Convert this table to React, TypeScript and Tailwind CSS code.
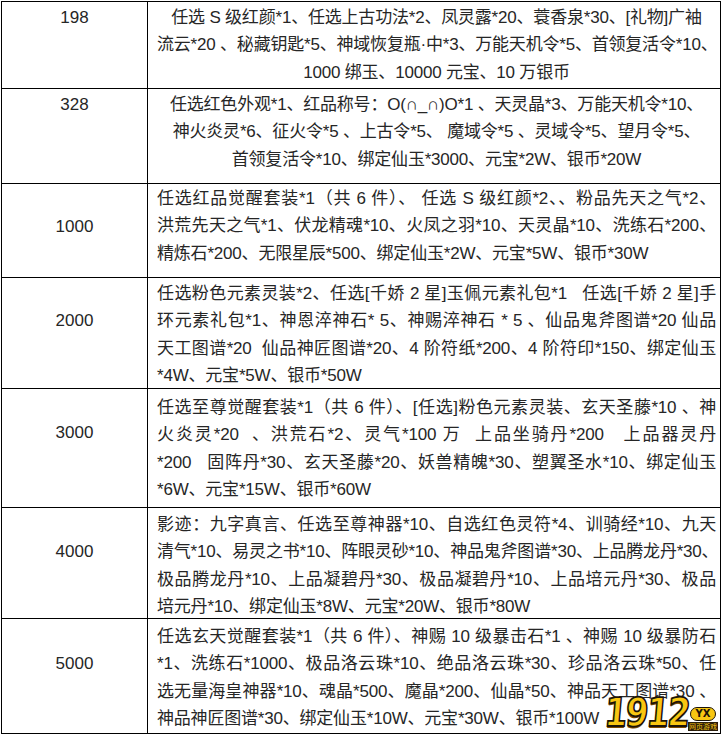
import React from 'react';

// ============================================================================
// Data
// ============================================================================

type Row = {
  amount: string;
  height: string;
  pad: string;
  numPad: string;
  centered?: boolean;
  lines: string[];
};

const rows: Row[] = [
  {
    amount: '198',
    height: 'h-[87px]',
    pad: 'pt-[2px]',
    numPad: 'pt-[2px]',
    centered: true,
    lines: [
      '任选 S 级红颜*1、任选上古功法*2、凤灵露*20、蓑香泉*30、[礼物]广袖',
      '流云*20 、秘藏钥匙*5、神域恢复瓶·中*3、万能天机令*5、首领复活令*10、',
      '1000 绑玉、10000 元宝、10 万银币',
    ],
  },
  {
    amount: '328',
    height: 'h-[95px]',
    pad: 'pt-[2px]',
    numPad: 'pt-[2px]',
    centered: true,
    lines: [
      '任选红色外观*1、红品称号：O(∩_∩)O*1 、天灵晶*3、万能天机令*10、',
      '神火炎灵*6、征火令*5 、上古令*5、 魔域令*5 、灵域令*5、望月令*5、',
      '首领复活令*10、绑定仙玉*3000、元宝*2W、银币*20W',
    ],
  },
  {
    amount: '1000',
    height: 'h-[94px]',
    pad: 'pt-[1px]',
    numPad: 'pt-[29px]',
    lines: [
      '任选红品觉醒套装*1（共 6 件）、 任选 S 级红颜*2、、粉品先天之气*2、',
      '洪荒先天之气*1、伏龙精魂*10、火凤之羽*10、天灵晶*10、洗练石*200、',
      '精炼石*200、无限星辰*500、绑定仙玉*2W、元宝*5W、银币*30W',
    ],
  },
  {
    amount: '2000',
    height: 'h-[111px]',
    pad: 'pt-[2px]',
    numPad: 'pt-[29px]',
    lines: [
      '任选粉色元素灵装*2、任选[千娇 2 星]玉佩元素礼包*1   任选[千娇 2 星]手',
      '环元素礼包*1、神恩淬神石* 5、神赐淬神石 * 5 、仙品鬼斧图谱*20 仙品',
      '天工图谱*20  仙品神匠图谱*20、4 阶符纸*200、4 阶符印*150、绑定仙玉',
      '*4W、元宝*5W、银币*50W',
    ],
  },
  {
    amount: '3000',
    height: 'h-[119px]',
    pad: 'pt-[5px]',
    numPad: 'pt-[30px]',
    lines: [
      '任选至尊觉醒套装*1（共 6 件）、[任选]粉色元素灵装、玄天圣藤*10 、神',
      '火炎灵*20  、洪荒石*2、灵气*100 万  上品坐骑丹*200   上品器灵丹',
      '*200   固阵丹*30、玄天圣藤*20、妖兽精魄*30、塑翼圣水*10、绑定仙玉',
      '*6W、元宝*15W、银币*60W',
    ],
  },
  {
    amount: '4000',
    height: 'h-[111px]',
    pad: 'pt-[3px]',
    numPad: 'pt-[30px]',
    lines: [
      '影迹：九字真言、任选至尊神器*10、自选红色灵符*4、训骑经*10、九天',
      '清气*10、易灵之书*10、阵眼灵砂*10、神品鬼斧图谱*30、上品腾龙丹*30、',
      '极品腾龙丹*10、上品凝碧丹*30、极品凝碧丹*10、上品培元丹*30、极品',
      '培元丹*10、绑定仙玉*8W、元宝*20W、银币*80W',
    ],
  },
  {
    amount: '5000',
    height: 'h-[115px]',
    pad: 'pt-[4px]',
    numPad: 'pt-[31px]',
    lines: [
      '任选玄天觉醒套装*1（共 6 件）、神赐 10 级暴击石*1 、神赐 10 级暴防石',
      '*1、洗练石*1000、极品洛云珠*10、绝品洛云珠*30、珍品洛云珠*50、任',
      '选无量海皇神器*10、魂晶*500、魔晶*200、仙晶*50、神品天工图谱*30 、',
      '神品神匠图谱*30、绑定仙玉*10W、元宝*30W、银币*100W',
    ],
  },
];

// ============================================================================
// Watermark
// ============================================================================

const Watermark = () => (
  <div className="pointer-events-none absolute bottom-[2px] right-[2px] flex items-end gap-[1px]">
    <span className="origin-bottom scale-y-[1.2] -skew-x-6 font-['DejaVu_Sans',sans-serif] text-[33px] font-black leading-none tracking-[-2px] text-[#f8c612] [-webkit-text-stroke:1.5px_#1b1308] [text-shadow:0_2px_0_#7a4a00]">
      1912
    </span>
    <div className="mb-[1px] flex flex-col items-center gap-[1px]">
      <span className="rounded-full border border-[#1b1308] bg-[#f8c612] px-[5px] font-['DejaVu_Sans',sans-serif] text-[10px] font-bold leading-[12px] text-[#1b1308]">
        YX
      </span>
      <span className="bg-[#2a1d0c] px-[1px] font-['Noto_Sans_CJK_SC',sans-serif] text-[7px] leading-[9px] text-[#f8c612]">
        网页游戏
      </span>
    </div>
  </div>
);

// ============================================================================
// Table
// ============================================================================

const RewardRow = ({ row }: { row: Row }) => (
  <div className={`flex border-b border-black ${row.height}`}>
    <div className={`w-[146px] shrink-0 border-r border-black text-center text-[17px] leading-[27.3px] ${row.numPad}`}>
      {row.amount}
    </div>
    <div className={`min-w-0 flex-1 pl-[9px] pr-[4px] text-[17px] leading-[27.3px] tracking-[-0.2px] ${row.pad}`}>
      {row.lines.map((line, i) => {
        const last = i === row.lines.length - 1;
        if (row.centered) {
          return (
            <div key={i} className="whitespace-pre text-center">
              {line}
            </div>
          );
        }
        return (
          <div
            key={i}
            className={last ? 'whitespace-pre' : 'whitespace-pre text-justify [text-align-last:justify]'}
          >
            {line}
          </div>
        );
      })}
    </div>
  </div>
);

export default function App() {
  return (
    <div className="h-[735px] w-[725px] overflow-hidden bg-white pl-[1px] pt-[1px] font-['Liberation_Sans','Noto_Sans_CJK_SC',sans-serif] text-[#262626]">
      <div className="relative w-[720px] border-x border-t border-black">
        {rows.map((row) => (
          <RewardRow key={row.amount} row={row} />
        ))}
        <Watermark />
      </div>
    </div>
  );
}
